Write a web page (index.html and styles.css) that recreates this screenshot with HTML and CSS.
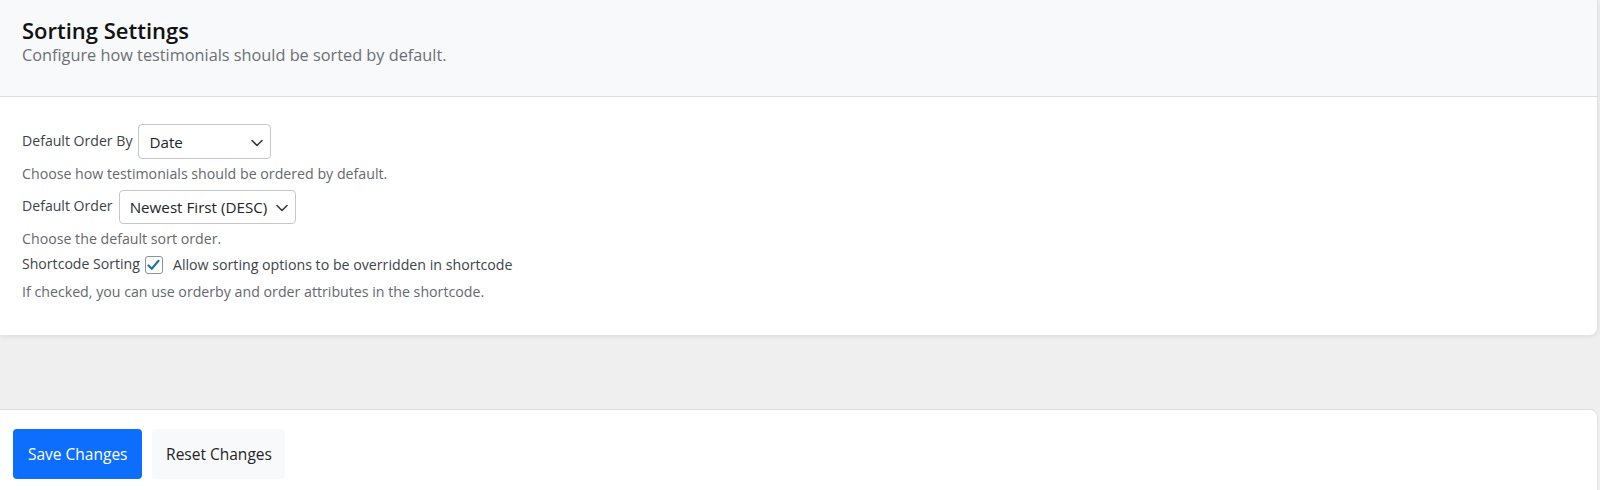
FILE: index.html
```html
<!DOCTYPE html>
<html lang="en">
<head>
<meta charset="utf-8">
<title>Sorting Settings</title>
<link rel="stylesheet" href="styles.css">
</head>
<body>
<div class="page">
  <section class="card">
    <header class="card-header">
      <h2 class="card-title">Sorting Settings</h2>
      <p class="card-subtitle">Configure how testimonials should be sorted by default.</p>
    </header>
    <div class="card-body">
      <div class="field">
        <label class="field-label" for="orderby">Default Order By</label>
        <span class="select-wrap select-orderby">
          <select id="orderby" class="select">
            <option>Date</option>
            <option>Title</option>
            <option>Rating</option>
            <option>Random</option>
          </select>
          <svg class="chevron" width="12" height="8" viewBox="0 0 12 8"><path d="M1 1.5 L6 6.5 L11 1.5" fill="none" stroke="#343a40" stroke-width="1.6" stroke-linecap="round" stroke-linejoin="round"/></svg>
        </span>
      </div>
      <p class="help">Choose how testimonials should be ordered by default.</p>
      <div class="field">
        <label class="field-label" for="order">Default Order</label>
        <span class="select-wrap select-order">
          <select id="order" class="select">
            <option>Newest First (DESC)</option>
            <option>Oldest First (ASC)</option>
          </select>
          <svg class="chevron" width="12" height="8" viewBox="0 0 12 8"><path d="M1 1.5 L6 6.5 L11 1.5" fill="none" stroke="#343a40" stroke-width="1.6" stroke-linecap="round" stroke-linejoin="round"/></svg>
        </span>
      </div>
      <p class="help">Choose the default sort order.</p>
      <div class="field field-check">
        <span class="field-label">Shortcode Sorting</span>
        <label class="check">
          <span class="checkbox">
            <svg width="13" height="12" viewBox="0 0 13 12"><path d="M1.5 6.5 L4.8 9.8 L11.5 1.8" fill="none" stroke="#2271b1" stroke-width="2.2" stroke-linecap="round" stroke-linejoin="round"/></svg>
          </span>
          <span class="check-text">Allow sorting options to be overridden in shortcode</span>
        </label>
      </div>
      <p class="help help-last">If checked, you can use orderby and order attributes in the shortcode.</p>
    </div>
  </section>
  <div class="spacer"></div>
  <footer class="actions">
    <button class="btn btn-primary" type="button">Save Changes</button>
    <button class="btn btn-light" type="button">Reset Changes</button>
  </footer>
</div>
</body>
</html>
```

FILE: styles.css
```css
* { box-sizing: border-box; }

html, body {
  margin: 0;
  padding: 0;
}

body {
  background: #efefef;
  font-family: "Open Sans", "Noto Sans", Arial, sans-serif;
  color: #1d2327;
  height: 490px;
  overflow: hidden;
}

.page {
  padding-right: 2px;
}

.card {
  background: #fff;
  border-radius: 0 0 8px 0;
  box-shadow: 0 2px 5px rgba(0, 0, 0, 0.07);
  border-right: 1px solid #e2e2e2;
}

.card-header {
  background: #f8f9fa;
  border-bottom: 1px solid #dcdcdc;
  height: 97px;
  padding: 16px 22px 0;
}

.card-title {
  margin: 0;
  font-size: 22px;
  font-weight: 600;
  line-height: 29px;
  color: #111;
}

.card-subtitle {
  margin: 0;
  font-size: 16.3px;
  line-height: 20px;
  color: #6b7075;
}

.card-body {
  padding: 27px 22px 33px;
}

.field {
  display: flex;
  align-items: center;
}

.field-check {
  margin-top: 3px;
}

.field-label {
  font-size: 14.1px;
  line-height: 20px;
  color: #3c434a;
  margin-right: 6px;
  position: relative;
  top: -1px;
}

.field-check .field-label {
  margin-right: 5px;
  top: -1.5px;
}

.select-wrap {
  position: relative;
  display: inline-block;
}

.select {
  appearance: none;
  -webkit-appearance: none;
  display: block;
  height: 35px;
  border: 1px solid #c6c7c9;
  border-radius: 4px;
  background: #fff;
  font-family: inherit;
  font-size: 15.2px;
  color: #212529;
  padding: 0 24px 0 10px;
  width: 100%;
}

.select-orderby { width: 133px; }
.select-order { width: 177px; }
.select-order .select { height: 34px; }

.chevron {
  position: absolute;
  right: 8px;
  top: 50%;
  margin-top: -3px;
  pointer-events: none;
}

.help {
  margin: 5px 0 6px;
  font-size: 14.2px;
  line-height: 20px;
  color: #646970;
}

.help-last {
  margin: 7px 0 0;
}

.check {
  display: inline-flex;
  align-items: center;
  gap: 10px;
}

.checkbox {
  width: 18px;
  height: 18px;
  border: 1px solid #8c8f94;
  border-radius: 3px;
  display: inline-flex;
  align-items: center;
  justify-content: center;
  background: #fff;
}

.check-text {
  font-size: 14.2px;
  line-height: 20px;
  color: #3c434a;
}

.spacer {
  height: 74px;
}

.actions {
  background: #fff;
  border-top: 1px solid #dcdcdc;
  border-right: 1px solid #e2e2e2;
  border-radius: 0 8px 0 0;
  padding: 19px 13px 30px;
  display: flex;
  gap: 10px;
}

.btn {
  height: 50px;
  border: none;
  border-radius: 4px;
  font-family: inherit;
  font-size: 15.5px;
  white-space: nowrap;
  padding: 0 15px;
  cursor: pointer;
}

.btn-primary {
  background: #0d6efd;
  color: #fff;
  min-width: 127px;
}

.btn-light {
  background: #f8f9fa;
  color: #212529;
  padding: 0 12px;
  min-width: 133px;
}
```
